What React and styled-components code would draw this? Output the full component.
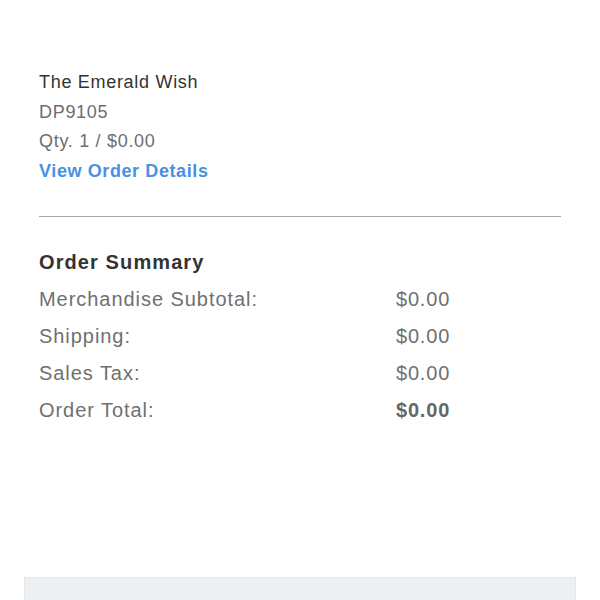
import React from 'react';
import styled, { createGlobalStyle } from 'styled-components';

const GlobalStyle = createGlobalStyle`
    html, body {
        margin: 0;
        padding: 0;
        background: #ffffff;
        font-family: "Liberation Sans", Arial, sans-serif;
    }
`;

const Page = styled.div`
    width: 600px;
    height: 600px;
    display: flex;
    flex-direction: column;
    overflow: hidden;
`;

const Content = styled.div`
    padding: 68px 39px 0 39px;
    flex: 1;
`;

const ItemBlock = styled.div`
    display: flex;
    flex-direction: column;
    padding-bottom: 30px;
    border-bottom: 1px solid #a8a8a8;
`;

const ItemLine = styled.div`
    font-size: 18px;
    line-height: 29.5px;
    letter-spacing: 0.7px;
    color: ${ props => props.dark ? "#333333" : "#6e6e6e" };
`;

const DetailsLink = styled.a`
    font-size: 18px;
    line-height: 29.5px;
    letter-spacing: 0.6px;
    font-weight: bold;
    color: #4a90e2;
    text-decoration: none;
    cursor: pointer;
`;

const Summary = styled.div`
    padding-top: 30px;
`;

const SummaryTitle = styled.div`
    font-size: 20px;
    font-weight: bold;
    letter-spacing: 1.1px;
    color: #333333;
    line-height: 30px;
    margin-bottom: 4px;
`;

const SummaryRow = styled.div`
    display: grid;
    grid-template-columns: 357px auto;
    font-size: 20px;
    line-height: 37px;
    letter-spacing: 0.95px;
    color: #707070;
`;

const Value = styled.span`
    font-weight: ${ props => props.bold ? "bold" : "normal" };
    color: ${ props => props.bold ? "#666666" : "#707070" };
    letter-spacing: 0.8px;
`;

const FooterBar = styled.div`
    margin: 0 24px;
    height: 22px;
    background: #edf0f3;
    border: 1px solid #e4e7ea;
    border-bottom: none;
`;

const rows = [
    { label: "Merchandise Subtotal:", value: "$0.00" },
    { label: "Shipping:", value: "$0.00" },
    { label: "Sales Tax:", value: "$0.00" },
    { label: "Order Total:", value: "$0.00", bold: true },
];

export default function App() {
    return (
        <Page>
            <GlobalStyle />
            <Content>
                <ItemBlock>
                    <ItemLine dark>The Emerald Wish</ItemLine>
                    <ItemLine>DP9105</ItemLine>
                    <ItemLine>Qty. 1 / $0.00</ItemLine>
                    <DetailsLink>View Order Details</DetailsLink>
                </ItemBlock>
                <Summary>
                    <SummaryTitle>Order Summary</SummaryTitle>
                    { rows.map(row =>
                        <SummaryRow key = { row.label }>
                            <span>{ row.label }</span>
                            <Value bold = { row.bold }>{ row.value }</Value>
                        </SummaryRow>) }
                </Summary>
            </Content>
            <FooterBar />
        </Page>
    );
}
